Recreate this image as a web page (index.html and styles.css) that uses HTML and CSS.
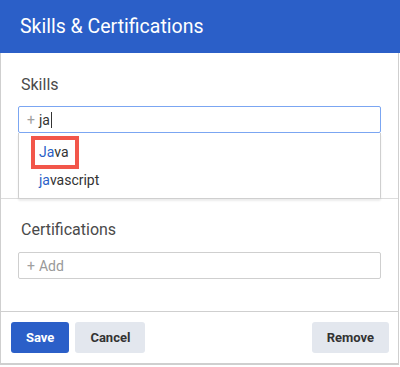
FILE: index.html
```html
<!DOCTYPE html>
<html lang="en">
<head>
    <meta charset="UTF-8">
    <meta name="viewport" content="width=device-width, initial-scale=1.0">
    <title>Skills &amp; Certifications</title>
    <link rel="stylesheet" href="styles.css">
</head>
<body>

    <div class="dialog">
        <!-- Header -->
        <header class="dialog-header">
            <h1>Skills &amp; Certifications</h1>
        </header>

        <div class="dialog-content">
            <!-- Skills -->
            <section class="field field-skills">
                <div class="field-label">Skills</div>
                <div class="tag-input is-focused">
                    <span class="plus">+</span>
                    <span class="typed">ja</span>
                    <span class="caret"></span>

                    <ul class="suggestions">
                        <li class="suggestion"><span class="marked"><span class="match">Ja</span>va</span></li>
                        <li class="suggestion"><span class="match">ja</span>vascript</li>
                    </ul>
                </div>
            </section>

            <!-- Certifications -->
            <section class="field field-certs">
                <div class="field-label">Certifications</div>
                <div class="tag-input">
                    <span class="plus">+</span>
                    <span class="placeholder">Add</span>
                </div>
            </section>

            <!-- Footer -->
            <footer class="dialog-footer">
                <button class="btn btn-primary">Save</button>
                <button class="btn btn-secondary">Cancel</button>
                <button class="btn btn-secondary btn-right">Remove</button>
            </footer>
        </div>
    </div>

</body>
</html>
```

FILE: styles.css
```css
/* General Page Styling */
body {
    margin: 0;
    padding: 0;
    background: white;
    font-family: Roboto, 'Liberation Sans', sans-serif;
    color: #333;
}

.dialog {
    width: 400px;
}

/* Header */
.dialog-header {
    background-color: #2b5fc8;
    height: 53px;
    padding-left: 20px;
}

.dialog-header h1 {
    margin: 0;
    font-size: 19.5px;
    font-weight: normal;
    line-height: 53px;
    color: white;
}

.dialog-content {
    border: 1px solid #cfcfcf;
    border-top: 0;
    border-bottom-width: 2px;
    margin-right: 1px;
}

/* Fields */
.field {
    padding: 22px 17px 0 17px;
    border-bottom: 1px solid #dcdcdc;
}

.field-skills {
    padding-bottom: 65px;
}

.field-certs {
    padding-top: 21px;
    padding-bottom: 32px;
}

.field-label {
    padding-left: 3px;
    font-size: 16px;
    line-height: 20px;
    color: #4a4a4a;
}

.field-skills .field-label {
    margin-bottom: 11px;
}

.field-certs .field-label {
    margin-bottom: 12px;
}

.tag-input {
    position: relative;
    display: flex;
    align-items: center;
    height: 25px;
    padding: 0 8px;
    border: 1px solid #cfcfcf;
    border-radius: 2px;
    font-size: 14px;
}

.tag-input.is-focused {
    border-color: #7ba6f2;
}

.plus {
    color: #a0a0a0;
    margin-right: 4px;
}

.typed {
    color: #333;
}

.caret {
    width: 1px;
    height: 16px;
    background: #333;
    margin-left: 1px;
}

.placeholder {
    color: #999;
}

/* Suggestions dropdown */
.suggestions {
    position: absolute;
    top: calc(100% + 1px);
    left: -1px;
    right: -1px;
    z-index: 10;
    list-style: none;
    margin: 0;
    padding: 5px 0 4px 0;
    background: white;
    border: 1px solid #cfcfcf;
    border-top: 0;
    border-radius: 0 0 2px 2px;
    box-shadow: 0 2px 2px rgba(0, 0, 0, 0.08);
}

.suggestion {
    height: 28px;
    line-height: 28px;
    padding-left: 20px;
    font-size: 14px;
    color: #333;
}

.match {
    color: #2b5fc8;
}

.marked {
    position: relative;
}

.marked::after {
    content: "";
    position: absolute;
    top: -8px;
    bottom: -9px;
    left: -8px;
    right: -10px;
    border: 4px solid #f2564a;
}

/* Footer */
.dialog-footer {
    display: flex;
    gap: 6px;
    padding: 10px 9px 10px 10px;
    border-top: 1px solid #cfcfcf;
    margin-top: -1px;
}

.btn {
    height: 31px;
    padding: 0 15px;
    border: 0;
    border-radius: 3px;
    font-family: Roboto, 'Liberation Sans', sans-serif;
    font-size: 13px;
    font-weight: bold;
}

.btn-primary {
    background: #2b5fc8;
    color: white;
}

.btn-secondary {
    background: #e3e7ee;
    color: #333;
}

.btn-right {
    margin-left: auto;
}
```
